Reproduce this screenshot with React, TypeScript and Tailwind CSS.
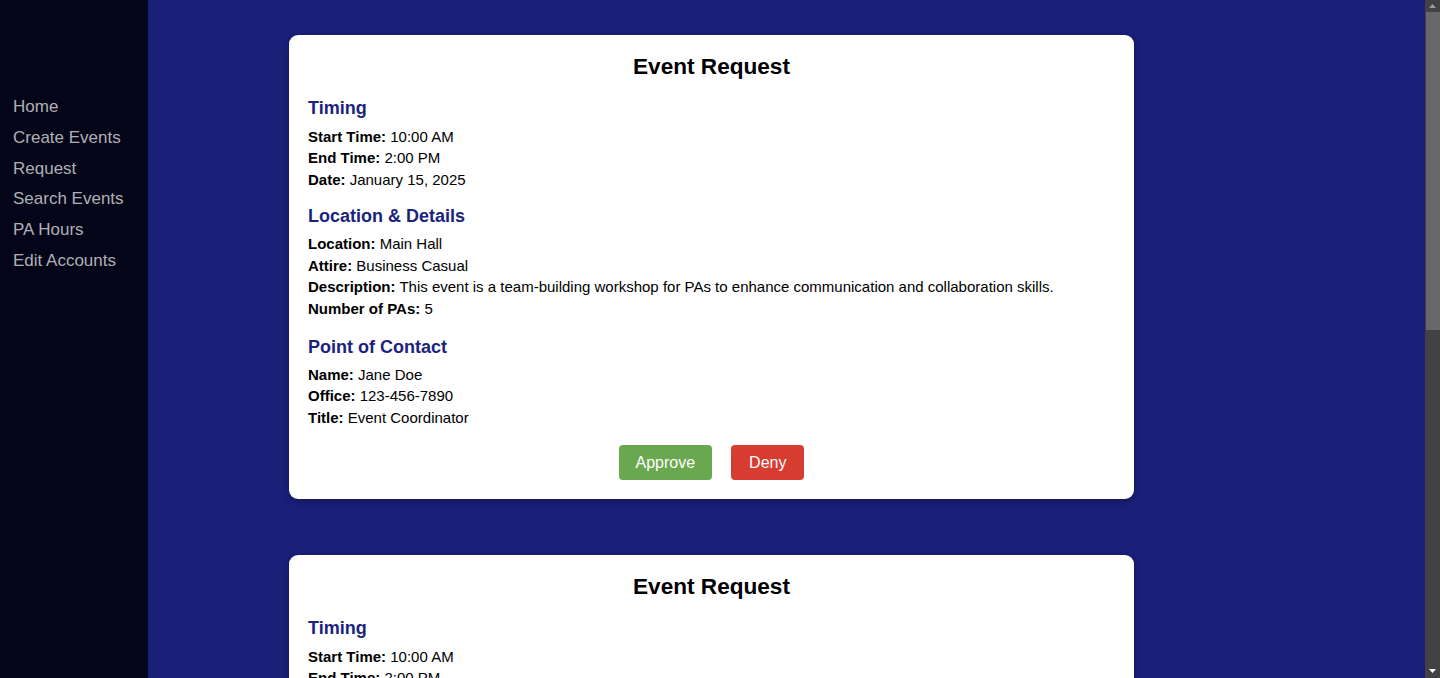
import React from 'react';

const navItems = ['Home', 'Create Events', 'Request', 'Search Events', 'PA Hours', 'Edit Accounts'];

function Field({ label, value }: { label: string; value: string }) {
  return (
    <p className="leading-[21.5px]">
      <strong className="font-bold">{label}:</strong> {value}
    </p>
  );
}

function EventRequestCard() {
  return (
    <div className="w-[845px] bg-white rounded-[9px] shadow-[0_2px_6px_rgba(0,0,0,0.3)] px-[19px] pt-[19px] pb-[19px] text-black text-[15px]">
      <h2 className="text-center font-bold text-[22.6px] leading-[26px]">Event Request</h2>

      <h3 className="mt-[17px] text-[18px] leading-[22px] font-bold text-[#1a237e]">Timing</h3>
      <div className="mt-[6.5px]">
        <Field label="Start Time" value="10:00 AM" />
        <Field label="End Time" value="2:00 PM" />
        <Field label="Date" value="January 15, 2025" />
      </div>

      <h3 className="mt-[14.5px] text-[18px] leading-[22px] font-bold text-[#1a237e]">Location &amp; Details</h3>
      <div className="mt-[6.5px]">
        <Field label="Location" value="Main Hall" />
        <Field label="Attire" value="Business Casual" />
        <Field
          label="Description"
          value="This event is a team-building workshop for PAs to enhance communication and collaboration skills."
        />
        <Field label="Number of PAs" value="5" />
      </div>

      <h3 className="mt-[16.5px] text-[18px] leading-[22px] font-bold text-[#1a237e]">Point of Contact</h3>
      <div className="mt-[6px]">
        <Field label="Name" value="Jane Doe" />
        <Field label="Office" value="123-456-7890" />
        <Field label="Title" value="Event Coordinator" />
      </div>

      <div className="mt-[17px] flex justify-center gap-[19px]">
        <button className="h-[35px] px-[17px] rounded-[4px] bg-[#6aa84f] text-white text-[16px]">Approve</button>
        <button className="h-[35px] px-[18px] rounded-[4px] bg-[#d63c2f] text-white text-[16px]">Deny</button>
      </div>
    </div>
  );
}

function ScrollBar() {
  return (
    <div className="w-[15px] shrink-0 bg-[#424242] flex flex-col">
      <div className="h-[12px] flex items-center justify-center">
        <svg width="7" height="4" viewBox="0 0 7 4">
          <path d="M3.5 0 L7 4 L0 4 Z" fill="#9a9a9a" />
        </svg>
      </div>
      <div className="h-[318px] ml-[1px] bg-[#686868]" />
      <div className="flex-1" />
      <div className="h-[14px] flex items-center justify-center">
        <svg width="7" height="4" viewBox="0 0 7 4">
          <path d="M0 0 L7 0 L3.5 4 Z" fill="#ffffff" />
        </svg>
      </div>
    </div>
  );
}

export default function App() {
  return (
    <div
      className="h-[678px] flex overflow-hidden bg-[#1a1f78]"
      style={{ fontFamily: '"Liberation Sans", Arial, sans-serif' }}
    >
      <div className="flex-1 flex overflow-hidden">
        <nav className="w-[148px] shrink-0 bg-[#05051a] pt-[92px] pl-[13px]">
          <ul className="flex flex-col">
            {navItems.map(item => (
              <li key={item} className="text-[17px] leading-[30.8px] text-[#b0b0b4]">
                {item}
              </li>
            ))}
          </ul>
        </nav>
        <main className="flex-1 pl-[141px] pt-[35px] flex flex-col gap-[56px]">
          <EventRequestCard />
          <EventRequestCard />
        </main>
      </div>
      <ScrollBar />
    </div>
  );
}
